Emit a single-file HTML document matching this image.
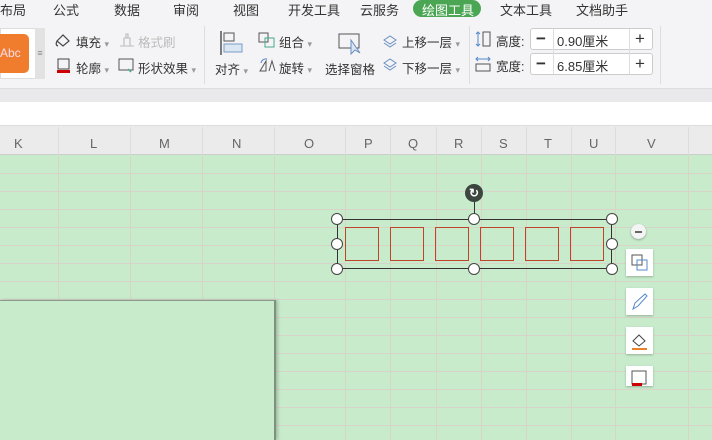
<!DOCTYPE html>
<html><head><meta charset="utf-8"><style>
*{margin:0;padding:0;box-sizing:border-box}
body{width:712px;height:440px;overflow:hidden;position:relative;background:#c8ebcc;font-family:"Liberation Sans","Noto Sans CJK SC",sans-serif;color:#333}
.a{position:absolute;white-space:nowrap}
.t{font-size:13px;top:0px}
.r{font-size:12.5px;color:#333}
.h{font-size:13px;color:#666;top:136px}
.vl{position:absolute;top:155px;bottom:0;width:1px;background:#d8d4c8}
.hl{position:absolute;left:0;right:0;height:1px;background:#d8d4c8}
.hd{position:absolute;top:127px;height:28px;width:1px;background:#ddd}
.sq{position:absolute;top:227px;width:34px;height:34px;border:1.5px solid #c0442a}
.hn{position:absolute;width:12px;height:12px;border-radius:50%;background:#fff;border:1px solid #444}
.sb{position:absolute;left:626px;width:27px;height:27px;background:#fff;box-shadow:0 1px 2px rgba(0,0,0,.25)}
.ar{color:#999;font-size:9px}
</style></head><body>
<div class="a" style="left:0;top:0;width:712px;height:90px;background:#f4f4f6"></div>
<div class="a" style="left:0;top:88px;width:712px;height:14px;background:#e9e9eb;border-top:1px solid #ddd"></div>
<div class="a" style="left:0;top:102px;width:712px;height:24px;background:#fff;border-bottom:1px solid #ddd"></div>
<div class="a" style="left:0;top:126px;width:712px;height:29px;background:#ebebeb;border-bottom:1px solid #ccc"></div>

<span class="a t" style="left:0">布局</span>
<span class="a t" style="left:53px">公式</span>
<span class="a t" style="left:114px">数据</span>
<span class="a t" style="left:173px">审阅</span>
<span class="a t" style="left:233px">视图</span>
<span class="a t" style="left:288px">开发工具</span>
<span class="a t" style="left:360px">云服务</span>
<div class="a" style="left:413px;top:0;width:68px;height:17px;border-radius:9px;background:#4aa653"></div>
<span class="a t" style="left:422px;color:#fff">绘图工具</span>
<span class="a t" style="left:500px">文本工具</span>
<span class="a t" style="left:576px">文档助手</span>

<div class="a" style="left:0;top:28px;width:36px;height:51px;background:#fff;border:1px solid #ddd"></div>
<div class="a" style="left:0;top:34px;width:29px;height:39px;background:#ef7d2d;border-radius:0 5px 5px 0;color:#fde;font-size:12px;line-height:39px">Abc</div>
<div class="a" style="left:35px;top:28px;width:10px;height:51px;background:#e2e2e2;color:#888;font-size:9px;text-align:center;line-height:51px">≡</div>

<svg class="a" style="left:54px;top:32px" width="18" height="16"><path d="M3 9 L9 3 L15 9 L9 14Z M3 9 Q1 13 4 14" fill="none" stroke="#444" stroke-width="1.2"/></svg>
<span class="a r" style="left:76px;top:32px">填充 <span class="ar">▾</span></span>
<svg class="a" style="left:118px;top:32px" width="18" height="16"><path d="M2 14H16 M6 14V6H12V14 M8 6V2H10V6" fill="none" stroke="#bbb" stroke-width="1.1"/></svg>
<span class="a r" style="left:138px;top:32px;color:#bbb">格式刷</span>
<svg class="a" style="left:56px;top:57px" width="16" height="18"><rect x="2" y="2" width="11" height="10" fill="none" stroke="#444"/><rect x="1" y="13" width="13" height="3" fill="#c00"/></svg>
<span class="a r" style="left:76px;top:58px">轮廓 <span class="ar">▾</span></span>
<svg class="a" style="left:118px;top:57px" width="18" height="16"><rect x="1" y="2" width="14" height="11" fill="none" stroke="#555"/><path d="M10 12l3 3" stroke="#4a8" stroke-width="1.5"/></svg>
<span class="a r" style="left:138px;top:58px">形状效果 <span class="ar">▾</span></span>
<div class="a" style="left:204px;top:26px;width:1px;height:58px;background:#ddd"></div>

<svg class="a" style="left:218px;top:30px" width="26" height="26"><path d="M3 1V25" stroke="#555" stroke-width="1.5"/><rect x="6" y="3" width="10" height="8" fill="none" stroke="#555"/><rect x="6" y="14" width="18" height="8" fill="#dbe6f3" stroke="#7a9cc6"/></svg>
<span class="a r" style="left:215px;top:59px">对齐 <span class="ar">▾</span></span>
<svg class="a" style="left:258px;top:32px" width="18" height="16"><rect x="1" y="1" width="9" height="9" fill="none" stroke="#555"/><rect x="7" y="6" width="9" height="9" fill="none" stroke="#4a8"/></svg>
<span class="a r" style="left:279px;top:32px">组合 <span class="ar">▾</span></span>
<svg class="a" style="left:258px;top:57px" width="18" height="16"><path d="M2 14L8 4V14Z M11 14L14 4L17 14" fill="none" stroke="#555"/><path d="M3 6A5 5 0 0 1 9 2" fill="none" stroke="#58c"/></svg>
<span class="a r" style="left:279px;top:58px">旋转 <span class="ar">▾</span></span>
<svg class="a" style="left:338px;top:32px" width="26" height="24"><rect x="1" y="2" width="20" height="14" fill="none" stroke="#555"/><path d="M13 8L13 22L17 18L22 21Z" fill="#dbe6f3" stroke="#6a8fc0"/></svg>
<span class="a r" style="left:325px;top:59px">选择窗格</span>
<svg class="a" style="left:382px;top:32px" width="18" height="16"><path d="M2 8L8 4L14 8L8 12Z M2 11L8 15L14 11" fill="none" stroke="#6a8fc0"/></svg>
<span class="a r" style="left:402px;top:32px">上移一层 <span class="ar">▾</span></span>
<svg class="a" style="left:382px;top:57px" width="18" height="16"><path d="M2 6L8 2L14 6L8 10Z M2 9L8 13L14 9" fill="none" stroke="#6a8fc0"/></svg>
<span class="a r" style="left:402px;top:58px">下移一层 <span class="ar">▾</span></span>
<div class="a" style="left:469px;top:26px;width:1px;height:58px;background:#ddd"></div>

<svg class="a" style="left:474px;top:30px" width="18" height="18"><path d="M4 2V16 M2 4L4 2L6 4 M2 14L4 16L6 14" fill="none" stroke="#58c"/><rect x="9" y="2" width="7" height="14" fill="none" stroke="#555"/></svg>
<span class="a r" style="left:496px;top:31px">高度:</span>
<svg class="a" style="left:474px;top:55px" width="18" height="18"><path d="M2 4H16 M4 2L2 4L4 6 M14 2L16 4L14 6" fill="none" stroke="#58c"/><rect x="2" y="9" width="14" height="7" fill="none" stroke="#555"/></svg>
<span class="a r" style="left:496px;top:56px">宽度:</span>
<div class="a" style="left:530px;top:28px;width:123px;height:22px;background:#fff;border:1px solid #ccc;border-radius:3px"></div>
<div class="a" style="left:530px;top:53px;width:123px;height:22px;background:#fff;border:1px solid #ccc;border-radius:3px"></div>
<div class="a" style="left:553px;top:29px;width:1px;height:45px;background:#ddd"></div>
<div class="a" style="left:629px;top:29px;width:1px;height:45px;background:#ddd"></div>
<span class="a" style="left:536px;top:29px;font-size:17px;font-weight:bold">−</span>
<span class="a" style="left:536px;top:54px;font-size:17px;font-weight:bold">−</span>
<span class="a" style="left:635px;top:29px;font-size:17px">+</span>
<span class="a" style="left:635px;top:54px;font-size:17px">+</span>
<span class="a r" style="left:557px;top:31px;font-size:13px">0.90厘米</span>
<span class="a r" style="left:557px;top:56px;font-size:13px">6.85厘米</span>
<div class="a" style="left:660px;top:26px;width:1px;height:58px;background:#ddd"></div>

<span class="a h" style="left:14px">K</span>
<span class="a h" style="left:90px">L</span>
<span class="a h" style="left:159px">M</span>
<span class="a h" style="left:232px">N</span>
<span class="a h" style="left:304px">O</span>
<span class="a h" style="left:364px">P</span>
<span class="a h" style="left:408px">Q</span>
<span class="a h" style="left:454px">R</span>
<span class="a h" style="left:499px">S</span>
<span class="a h" style="left:544px">T</span>
<span class="a h" style="left:589px">U</span>
<span class="a h" style="left:647px">V</span>
<div class="hd" style="left:58px"></div><div class="hd" style="left:130px"></div><div class="hd" style="left:202px"></div><div class="hd" style="left:274px"></div><div class="hd" style="left:345px"></div><div class="hd" style="left:390px"></div><div class="hd" style="left:436px"></div><div class="hd" style="left:481px"></div><div class="hd" style="left:526px"></div><div class="hd" style="left:571px"></div><div class="hd" style="left:615px"></div><div class="hd" style="left:688px"></div>

<div class="vl" style="left:58px"></div><div class="vl" style="left:130px"></div><div class="vl" style="left:202px"></div><div class="vl" style="left:274px"></div><div class="vl" style="left:345px"></div><div class="vl" style="left:390px"></div><div class="vl" style="left:436px"></div><div class="vl" style="left:481px"></div><div class="vl" style="left:526px"></div><div class="vl" style="left:571px"></div><div class="vl" style="left:615px"></div><div class="vl" style="left:688px"></div>
<div class="hl" style="top:173px"></div><div class="hl" style="top:191px"></div><div class="hl" style="top:209px"></div><div class="hl" style="top:227px"></div><div class="hl" style="top:245px"></div><div class="hl" style="top:263px"></div><div class="hl" style="top:281px"></div><div class="hl" style="top:299px"></div><div class="hl" style="top:317px"></div><div class="hl" style="top:335px"></div><div class="hl" style="top:353px"></div><div class="hl" style="top:371px"></div><div class="hl" style="top:389px"></div><div class="hl" style="top:407px"></div><div class="hl" style="top:425px"></div>

<div class="a" style="left:0;top:300px;width:276px;height:140px;background:#c8ebcc;border-top:1px solid #8a9a8c;border-right:2px solid #7f8f80;box-shadow:2px 0 3px rgba(0,0,0,.2)"></div>

<div class="a" style="left:337px;top:219px;width:275px;height:50px;border:1px solid #333"></div>
<div class="a" style="left:474px;top:200px;width:1px;height:19px;background:#333"></div>
<div class="a" style="left:465px;top:184px;width:18px;height:18px;border-radius:50%;background:#3c463e;color:#fff;font-size:12px;text-align:center;line-height:18px;font-weight:bold">↻</div>
<div class="sq" style="left:345px"></div><div class="sq" style="left:390px"></div><div class="sq" style="left:435px"></div><div class="sq" style="left:480px"></div><div class="sq" style="left:525px"></div><div class="sq" style="left:570px"></div>
<div class="hn" style="left:331px;top:213px"></div><div class="hn" style="left:468px;top:213px"></div><div class="hn" style="left:606px;top:213px"></div>
<div class="hn" style="left:331px;top:238px"></div><div class="hn" style="left:606px;top:238px"></div>
<div class="hn" style="left:331px;top:263px"></div><div class="hn" style="left:468px;top:263px"></div><div class="hn" style="left:606px;top:263px"></div>

<div class="a" style="left:631px;top:224px;width:15px;height:15px;border-radius:50%;background:#f4f4f4;box-shadow:0 1px 2px rgba(0,0,0,.3)"><div style="position:absolute;left:4px;top:7px;width:7px;height:1.5px;background:#666"></div></div>
<div class="sb" style="top:249px"><svg width="27" height="27"><rect x="6" y="6" width="10" height="10" fill="none" stroke="#555"/><rect x="11" y="11" width="10" height="10" fill="none" stroke="#58c"/></svg></div>
<div class="sb" style="top:288px"><svg width="27" height="27"><path d="M7 21L9 15L19 6L21 8L12 18Z" fill="none" stroke="#58c"/></svg></div>
<div class="sb" style="top:327px"><svg width="27" height="27"><path d="M7 14L13 8L19 14L13 19Z" fill="none" stroke="#444"/><rect x="6" y="21" width="15" height="2" fill="#e8822a"/></svg></div>
<div class="sb" style="top:366px;height:20px"><svg width="27" height="20"><rect x="6" y="5" width="14" height="13" fill="none" stroke="#555"/><rect x="6" y="17" width="10" height="3" fill="#c00"/></svg></div>
</body></html>
